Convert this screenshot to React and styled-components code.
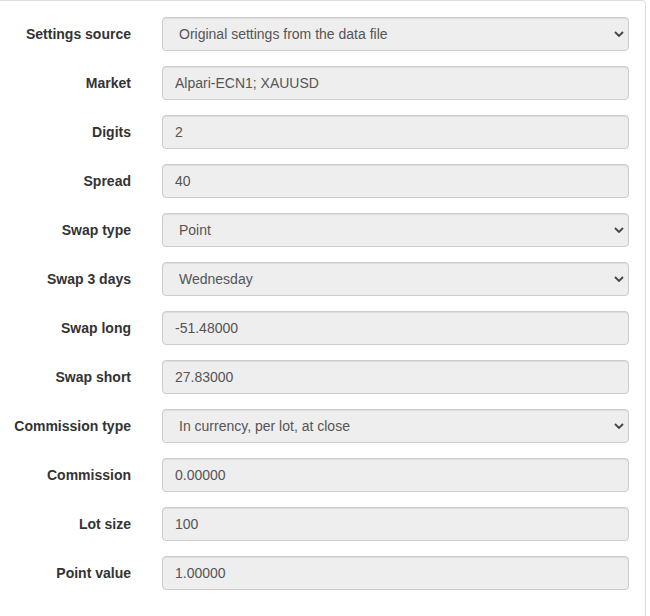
import React from "react";
import styled, { createGlobalStyle } from "styled-components";

const GlobalStyle = createGlobalStyle`
  body {
    margin: 0;
    background: #fff;
    font-family: "Liberation Sans", Arial, sans-serif;
  }
`

const Panel = styled.div`
  box-sizing: border-box;
  width: 646px;
  min-height: 616px;
  border: 1px solid #ddd;
  border-left: none;
  border-bottom: none;
  border-radius: 0 4px 0 0;
  padding: 16px 16px 0 0;
`

const Form = styled.form`
  display: grid;
  grid-template-columns: 131px 467px;
  column-gap: 31px;
  row-gap: 15px;
  align-items: center;
`

const Label = styled.label`
  text-align: right;
  font-size: 14px;
  font-weight: bold;
  color: #333;
`

const Input = styled.input`
  box-sizing: border-box;
  width: 100%;
  height: 34px;
  padding: 6px 12px;
  border: 1px solid #ccc;
  border-radius: 4px;
  background: #eee;
  box-shadow: inset 0 1px 1px rgba(0, 0, 0, 0.075);
  font-family: "Liberation Sans", Arial, sans-serif;
  font-size: 14px;
  color: #555;
  outline: none;
`

const SelectWrap = styled.div`
  position: relative;
  height: 34px;
`

const Select = styled.select`
  appearance: none;
  box-sizing: border-box;
  width: 100%;
  height: 34px;
  padding: 6px 12px 6px 16px;
  border: 1px solid #ccc;
  border-radius: 4px;
  background: #eee;
  box-shadow: inset 0 1px 1px rgba(0, 0, 0, 0.075);
  font-family: "Liberation Sans", Arial, sans-serif;
  font-size: 14px;
  color: #555;
  outline: none;
`

const Chevron = styled.svg`
  position: absolute;
  right: 5px;
  top: 14px;
  pointer-events: none;
`

const fields = [
    {label: "Settings source", select: "Original settings from the data file"},
    {label: "Market", value: "Alpari-ECN1; XAUUSD"},
    {label: "Digits", value: "2"},
    {label: "Spread", value: "40"},
    {label: "Swap type", select: "Point"},
    {label: "Swap 3 days", select: "Wednesday"},
    {label: "Swap long", value: "-51.48000"},
    {label: "Swap short", value: "27.83000"},
    {label: "Commission type", select: "In currency, per lot, at close"},
    {label: "Commission", value: "0.00000"},
    {label: "Lot size", value: "100"},
    {label: "Point value", value: "1.00000"},
]

const Field = ({field}) => {
    if (field.select) {
        return (
            <SelectWrap>
                <Select defaultValue={field.select}>
                    <option>{field.select}</option>
                </Select>
                <Chevron width="10" height="6" viewBox="0 0 10 6">
                    <path d="M1 1 L5 5 L9 1" fill="none" stroke="#444" strokeWidth="1.8"/>
                </Chevron>
            </SelectWrap>
        )
    }
    return <Input defaultValue={field.value} readOnly/>
}

const App = () => {
    return (
        <>
            <GlobalStyle/>
            <Panel>
                <Form>
                    {fields.map(field => (
                        <React.Fragment key={field.label}>
                            <Label>{field.label}</Label>
                            <Field field={field}/>
                        </React.Fragment>
                    ))}
                </Form>
            </Panel>
        </>
    );
};

export default App;
